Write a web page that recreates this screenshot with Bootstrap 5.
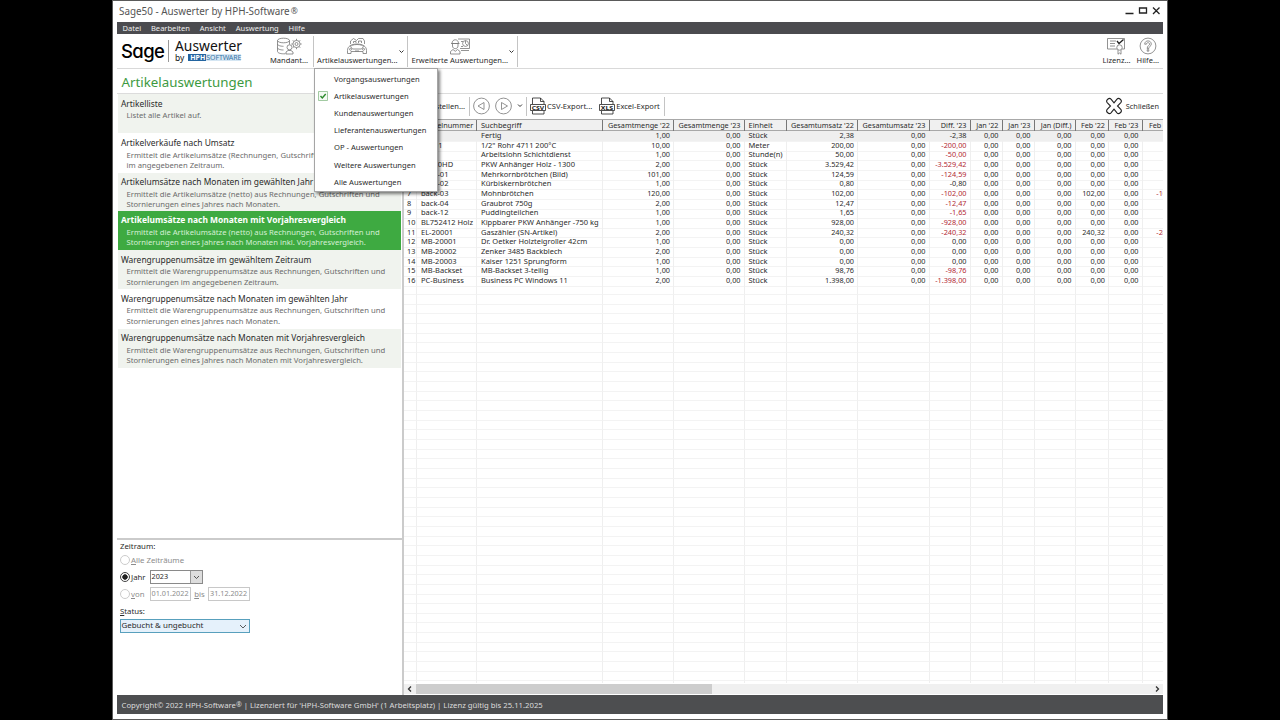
<!DOCTYPE html>
<html lang="de">
<head>
  <meta charset="UTF-8">
  <title>Sage50 - Auswerter by HPH-Software</title>
  <meta name="viewport" content="width=device-width, initial-scale=1">
  <link href="https://cdn.jsdelivr.net/npm/bootstrap@5.3.0/dist/css/bootstrap.min.css" rel="stylesheet">
  <style>
    body { background: #000; font-family: "Noto Sans", "Open Sans", sans-serif; font-size: 7.55px; line-height: 10px; color: #2b2b2b; height: 720px; overflow: hidden; }
    svg { display: block; fill: none; stroke: #777; stroke-width: .8; }
    .app-window { width: 1056px; height: 720px; margin-left: 112px; background: #fff; border: 1px solid #5a5a5a; padding: 0 4px 5px; }
    .title-bar { height: 21px; font-size: 9.87px; color: #555; padding: 0 0 2px 2px; }
    .title-bar sup { font-size: 8.5px; top: -1px; margin-left: 1px; }
    .win-buttons { stroke: #222; stroke-width: 1.3; }
    .menu-bar { height: 12px; background: #4b4b4f; color: #eee; padding-left: 5.5px; gap: 9.8px; }
    .main-tools { height: 35px; border-bottom: 1px solid #d9d9d9; }
    .tool { height: 31px; margin-top: 2px; padding: 1px 0 0; }
    .tool-label { line-height: 11px; white-space: nowrap; }
    .tool-split { width: 1px; background: #c4c4c4; }
    .brand { width: 149px; padding-left: 4px; color: #111; }
    .brand-sage { font: 500 18.5px/24px Inter, sans-serif; font-feature-settings: "cv11", "ss01"; letter-spacing: -.6px; width: 42px; color: #000; }
    .brand-line { width: 1px; height: 22px; background: #999; margin: 0 6px 0 5px; }
    .brand-name { font-size: 13.85px; line-height: 13px; color: #111; }
    .brand-by { font-size: 8.4px; line-height: 11px; }
    .brand-hph { background: #2364a0; color: #fff; font: 700 7px/7px "Noto Sans", sans-serif; padding: 0 1px 0 2px; height: 7px; }
    .brand-soft { background: #d5e6f3; color: #3a76a8; font: 7px/7px "Noto Sans", sans-serif; height: 7px; letter-spacing: -.12px; }
    .page-title { height: 25px; font-size: 13.3px; line-height: 26px; color: #3d9a41; padding-left: 4.5px; border-bottom: 1px solid #dcdcdc; }
    .side { width: 287px; border-right: 2px solid #cbcbcb; }
    .report-list { height: 444px; padding: .2px 1px 0 .5px; }
    .report-list .list-group-item { height: 39.22px; padding: 4.5px 3px 0; border: 0; border-radius: 0; background: #fff; color: #2b2b2b; flex-shrink: 0; }
    .report-list .list-group-item:nth-child(odd) { background: #f0f3ee; }
    .report-list .list-group-item.active { background: #3eaa41; color: #fff; }
    .report-name { font-size: 8.45px; line-height: 10.5px; white-space: nowrap; padding-left: .4px; }
    .active .report-name { font-weight: 700; }
    .report-text { font-size: 7.68px; line-height: 10.4px; color: #6b6b6b; padding: 1.2px 0 0 6px; white-space: nowrap; }
    .active .report-text { color: #d5f0d5; }
    .filters { border-top: 2px solid #cbcbcb; padding: 1.4px 0 0 3px; font-size: 7.8px; line-height: 10px; }
    .filter-row { height: 17px; }
    .off { color: #8c8c8c; }
    .dot { width: 10px; height: 10px; border: 1px solid #ccc; border-radius: 50%; margin-right: 1px; }
    .dot-on { border-color: #444; background: radial-gradient(circle, #222 0 2.4px, #fff 3px); }
    .radio-label { width: 18.5px; }
    .till-label { width: 17px; text-align: center; }
    .field { height: 14px; border: 1px solid #c8c8c8; font-size: 7.25px; padding-left: 1px; line-height: 10.5px; }
    .field-date { width: 41.5px; }
    .field-year { width: 53px; border-color: #8a8a8a; }
    .field-year .drop { width: 12px; height: 12px; background: #ddd; border-left: 1px solid #999; }
    .status-label { margin-top: 3.3px; }
    .field-status { width: 130px; background: #e5f1fb; border-color: #58a0bd; font-size: 7.93px; margin-top: 3px; line-height: 11.5px; padding-left: .5px; }
    .grid-tools { height: 25px; padding: 0 0 1px 5px; }
    .grid-tools .tool-split { height: 19px; }
    .grid-tools .tool-label { line-height: 12px; }
    .create-label { width: 56px; text-align: right; }
    .file-icon { stroke: #222; margin-left: 3px; }
    .csv-label { margin-left: 1px; }
    .close-label { margin: 0 4px 0 3px; font-size: 7.3px; }
    .grid-row { display: grid; grid-template-columns: 13px 60px 126px 71px 70.5px 42.5px 71px 71.5px 41px 32px 32px 41px 33.5px 33.5px 43px; height: 9.66px; }
    .grid-row > div { border-right: 1px solid #efefef; border-bottom: 1px solid #f3f3f3; padding: 0 3px 0 4px; line-height: 9.9px; font-size: 7.5px; white-space: nowrap; }
    .grid-row > div:first-child { padding: 0 0 0 3px; font-size: 7.3px; }
    .grid-row > .num { text-align: right; font-size: 7.3px; }
    .grid-row > .minus { color: #b22a35; }
    .grid-row.picked { background: #efefef; }
    .grid-row.head { height: 12px; background: #f0f0f0; border-top: 1px solid #a8a8a8; border-bottom: 1px solid #a8a8a8; }
    .grid-row.head > div { border-right-color: #777; border-bottom: 0; line-height: 10.5px; }
    .grid-row.head > div:nth-child(2) { font-size: 7.35px; }
    .grid-row.head > .num { font-size: 7.25px; }
    .grid-body { height: 552px; overflow: hidden; }
    .scroll-x { height: 10px; background: #f0f0f0; margin-top: 1px; }
    .scroll-x svg { stroke: #333; stroke-width: 1.3; }
    .scroll-thumb { width: 296px; height: 10px; background: #cdcdcd; }
    .foot { height: 19px; background: #4d4e50; color: #dcdcdc; font-size: 7.73px; padding-left: 4.5px; }
    .foot sup { font-size: 7px; top: -1px; }
    .arrow-dark { stroke: #333; stroke-width: 1; }
    .eval-menu { position: absolute; left: 0; top: 32px; width: 124px; height: 124px; padding: 1.5px 0; border: 1px solid #a5a5a5; border-radius: 0; background: #fff; box-shadow: 2px 2px 3px rgba(0, 0, 0, .5); z-index: 10; font-size: 7.58px; min-width: 0; }
    .eval-menu .dropdown-item { height: 17.2px; padding: 0 0 0 3px; color: #2b2b2b; line-height: 17px; }
    .tick-slot { width: 16px; }
  </style>
  <script src="https://cdn.jsdelivr.net/npm/bootstrap@5.3.0/dist/js/bootstrap.bundle.min.js"></script>
</head>
<body>

<div class="app-window d-flex flex-column">

  <!-- Titelleiste -->
  <div class="title-bar d-flex align-items-center justify-content-between">
    <div>Sage50 - Auswerter by HPH-Software<sup>®</sup></div>
    <svg class="win-buttons" width="39" height="12" viewBox="0 0 39 12"><path d="M1.500 8.500h8M15.500 3h7v5h-7zM29 2.500l6.500 6.500M35.500 2.500L29 9"/></svg>
  </div>

  <!-- Menü -->
  <div class="menu-bar d-flex align-items-center">
    <span>Datei</span><span>Bearbeiten</span><span>Ansicht</span><span>Auswertung</span><span>Hilfe</span>
  </div>

  <!-- Werkzeugleiste -->
  <div class="main-tools d-flex">
    <div class="brand d-flex align-items-center">
      <div class="brand-sage">Sage</div>
      <div class="brand-line"></div>
      <div>
        <div class="brand-name">Auswerter</div>
        <div class="d-flex align-items-center brand-by"><span class="me-1">by</span><span class="brand-hph">HPH</span><span class="brand-soft">SOFTWARE</span></div>
      </div>
    </div>

    <div class="tool d-flex flex-column align-items-center ps-1 pe-1 me-1">
      <svg width="26" height="18" viewBox="0 0 26 18"><ellipse cx="7.500" cy="3.500" rx="6" ry="2.300"/><path d="M1.500 3.500v11c0 1.300 2.700 2.300 6 2.300h2M13.500 3.500v4M1.500 7c0 1.300 2.700 2.300 6 2.300M1.500 10.700c0 1.300 2.700 2.300 6 2.300M10 17v-2l2-1.500h3l2 1.500v2z"/><circle cx="13.500" cy="10.300" r="2.500"/><circle cx="20.500" cy="7" r="3.600"/><circle cx="20.500" cy="7" r="1.500"/><path d="M20.500 1.800v1.600M20.500 10.600v1.600M15.300 7h1.600M24.100 7h1.600M16.800 3.300l1.200 1.200M23 9.500l1.200 1.200M24.200 3.300l-1.200 1.200M18 9.500l-1.200 1.200"/></svg>
      <span class="tool-label">Mandant...</span>
    </div>
    <div class="tool-split tool" style="margin-left:-3px"></div>

    <div class="tool d-flex position-relative">
      <div class="d-flex flex-column align-items-center" style="padding-left:3px">
        <svg width="22" height="18" viewBox="0 0 22 18"><path d="M4.500 7V4l3-2.500 3 2M10.500 3.500l2-2h4.500l1.500 2.500v3"/><path d="M1.500 13.500c0-4 3.500-6.500 9.500-6.500s9.500 2.500 9.500 6.500M1.500 13.500v3h3.500v-2h12v2h3.500v-3M4.500 9.500c1-.8 2.500-2 6.500-2s5.500 1.200 6.500 2l-2 2.500h-9zM7.500 6V4.500h2.500V6M12.500 6V4h3v2M9 14h4"/><circle cx="4.500" cy="12.300" r="1"/><circle cx="17.500" cy="12.300" r="1"/></svg>
        <span class="tool-label">Artikelauswertungen...</span>
      </div>
      <svg class="arrow-dark my-auto" width="10" height="6" viewBox="0 0 10 6"><path d="M2.500 1.500l2 2 2-2"/></svg>
      <ul class="eval-menu list-unstyled mb-0" id="evalMenu"></ul>
    </div>
    <div class="tool-split tool"></div>

    <div class="tool d-flex">
      <div class="d-flex flex-column align-items-center">
        <svg class="ms-1" width="22" height="18" viewBox="0 0 22 18"><path d="M9 2h11.500v9.500H11M12 13.500h8"/><path d="M3 6.500c0-5 6.500-5 6.500 0zM2 6.500h8.500M3.500 7v2c0 3.500 5.500 3.500 5.500 0V7M1.500 17v-2.500L4 12.500l2.300 1.800 2.200-1.800 2.500 2V17zM12 4.500h2M12 9.500h2"/><circle cx="16.500" cy="6.500" r="2.900"/><path d="M16.500 3.600v2.900l2 2"/></svg>
        <span class="tool-label" style="padding-left:3px">Erweiterte Auswertungen...</span>
      </div>
      <svg class="arrow-dark my-auto" width="9" height="6" viewBox="0 0 9 6"><path d="M1.500 1.500l2 2 2-2"/></svg>
    </div>
    <div class="tool-split tool"></div>

    <div class="tool d-flex flex-column align-items-center ms-auto">
      <svg style="margin-right:2px" width="20" height="18" viewBox="0 0 20 18"><path d="M11 12H1.500V1.500h17V12H16M4 4h6M4 6.500h5M4 9h5"/><circle cx="13.500" cy="10.500" r="2.700"/><path d="M12 13v4.200l1.500-1.200 1.500 1.200V13"/><path d="M11 4l2 2.500 4.500-4" stroke="#222" stroke-width="1.300"/></svg>
      <span class="tool-label">Lizenz...</span>
    </div>
    <div class="tool d-flex flex-column align-items-center" style="margin:2px 4px 0 6px">
      <svg width="18" height="18" viewBox="0 0 18 18"><circle cx="9" cy="9" r="7.900"/><path d="M5.700 7.200c0-4.400 6.600-4.400 6.600 0 0 2-2.500 2-2.500 4.300H8.200c0-3.200 2.500-2.900 2.500-4.300 0-2-3.300-2-3.300 0zM8.200 12.700h1.600v1.500H8.200z"/></svg>
      <span class="tool-label">Hilfe...</span>
    </div>
  </div>

  <div class="page-title">Artikelauswertungen</div>

  <div class="d-flex flex-grow-1 overflow-hidden">

    <!-- Auswertungen und Filter -->
    <div class="side d-flex flex-column flex-shrink-0">
      <div class="report-list list-group" id="reportList"></div>

      <div class="filters flex-grow-1">
        <div>Zeitraum:</div>
        <div class="filter-row d-flex align-items-center off"><span class="dot"></span><span><u>A</u>lle Zeiträume</span></div>
        <div class="filter-row d-flex align-items-center">
          <span class="dot dot-on"></span><span class="radio-label"><u>J</u>ahr</span>
          <div class="field field-year d-flex justify-content-between"><span>2023</span><span class="drop"><svg width="11" height="12" viewBox="0 0 11 12"><path d="M3 5l2.500 2.500L8 5" stroke="#333"/></svg></span></div>
        </div>
        <div class="filter-row d-flex align-items-center off">
          <span class="dot"></span><span class="radio-label"><u>v</u>on</span>
          <div class="field field-date">01.01.2022</div>
          <span class="till-label"><u>b</u>is</span>
          <div class="field field-date">31.12.2022</div>
        </div>
        <div class="status-label"><u>S</u>tatus:</div>
        <div class="field field-status d-flex justify-content-between"><span>Gebucht &amp; ungebucht</span><svg width="12" height="12" viewBox="0 0 12 12"><path d="M3 5l3 3 3-3" stroke="#333"/></svg></div>
      </div>
    </div>

    <!-- Ergebnistabelle -->
    <div class="flex-grow-1 overflow-hidden">
      <div class="grid-tools d-flex align-items-center">
        <span class="tool-label create-label">Erstellen...</span>
        <span class="tool-split ms-1"></span>
        <svg width="56" height="18" viewBox="0 0 56 18"><circle cx="11.500" cy="9" r="7.900"/><path d="M14 5.500v7L8 9z"/><circle cx="33.500" cy="9" r="7.900"/><path d="M31.500 5.500v7l6-3.500z"/><path class="arrow-dark" d="M48 7.500l2 2 2-2"/></svg>
        <span class="tool-split"></span>
        <svg class="file-icon" width="17" height="18" viewBox="0 0 17 18"><path d="M2.500 7V1h8l3.500 3.500V7M10.500 1v3.500H14M2.500 14v3H14v-3M.5 7.500h15v6H.5z"/><text x="1.800" y="12.700" font-size="6" font-weight="700" textLength="12.400" lengthAdjust="spacingAndGlyphs" fill="#222" stroke="none">CSV</text></svg>
        <span class="tool-label">CSV-Export...</span>
        <svg class="file-icon" style="margin-left:7px" width="16" height="18" viewBox="0 0 16 18"><path d="M2.500 7V1h8l3.500 3.500V7M10.500 1v3.500H14M2.500 14v3H14v-3M.5 7.500h15v6H.5z"/><text x="1.800" y="12.700" font-size="6" font-weight="700" textLength="12.400" lengthAdjust="spacingAndGlyphs" fill="#222" stroke="none">XLS</text></svg>
        <span class="tool-label csv-label">Excel-Export</span>
        <span class="tool-split ms-1"></span>
        <svg class="ms-auto" width="18" height="18" viewBox="0 0 18 18"><path stroke="#222" stroke-width="1.100" d="M9 5.800l3-3.600c1.800-2 5.700 1 3.800 3.400L12.500 9l3.300 3.400c1.900 2.400-2 5.400-3.800 3.400l-3-3.600-3 3.600c-1.800 2-5.700-1-3.800-3.400L5.500 9 2.200 5.600C.3 3.200 4.200.2 6 2.200z"/></svg>
        <span class="tool-label close-label">Schließen</span>
      </div>
      <div class="grid-row head" id="gridHead"></div>
      <div class="grid-body" id="gridBody"></div>
      <div class="scroll-x d-flex align-items-center justify-content-between">
        <svg width="12" height="10" viewBox="0 0 12 10"><path d="M7 2.500L4.500 5 7 7.500"/></svg>
        <div class="scroll-thumb me-auto"></div>
        <svg width="12" height="10" viewBox="0 0 12 10"><path d="M5 2.500L7.500 5 5 7.500"/></svg>
      </div>
    </div>
  </div>

  <!-- Statusleiste -->
  <div class="foot d-flex align-items-center"><span>Copyright© 2022 HPH-Software<sup>®</sup> | Lizenziert für 'HPH-Software GmbH' (1 Arbeitsplatz) | Lizenz gültig bis 25.11.2025</span></div>
</div>

<script>
  const menu = ["Vorgangsauswertungen", "Artikelauswertungen", "Kundenauswertungen", "Lieferantenauswertungen",
    "OP - Auswertungen", "Weitere Auswertungen", "Alle Auswertungen"];
  const tick = '<svg width="10" height="10" viewBox="0 0 10 10"><path d="M.5.5h9v9h-9z" fill="#f4faf4" stroke="#8bbd8b"/><path d="M2.500 5l1.800 2L7.700 3" stroke="#2b8a2b" stroke-width="1.400"/></svg>';

  document.getElementById('evalMenu').innerHTML = menu.map((m, i) =>
    `<li class="dropdown-item d-flex align-items-center"><span class="tick-slot">${i === 1 ? tick : ''}</span>${m}</li>`).join('');

  const reports = [
    ["Artikelliste", "Listet alle Artikel auf."],
    ["Artikelverkäufe nach Umsatz", "Ermittelt die Artikelumsätze (Rechnungen, Gutschriften)<br>im angegebenen Zeitraum."],
    ["Artikelumsätze nach Monaten im gewählten Jahr", "Ermittelt die Artikelumsätze (netto) aus Rechnungen, Gutschriften und<br>Stornierungen eines Jahres nach Monaten."],
    ["Artikelumsätze nach Monaten mit Vorjahresvergleich", "Ermittelt die Artikelumsätze (netto) aus Rechnungen, Gutschriften und<br>Stornierungen eines Jahres nach Monaten inkl. Vorjahresvergleich."],
    ["Warengruppenumsätze im gewähltem Zeitraum", "Ermittelt die Warengruppenumsätze aus Rechnungen, Gutschriften und<br>Stornierungen im angegebenen Zeitraum."],
    ["Warengruppenumsätze nach Monaten im gewählten Jahr", "Ermittelt die Warengruppenumsätze aus Rechnungen, Gutschriften und<br>Stornierungen eines Jahres nach Monaten."],
    ["Warengruppenumsätze nach Monaten mit Vorjahresvergleich", "Ermittelt die Warengruppenumsätze aus Rechnungen, Gutschriften und<br>Stornierungen eines Jahres nach Monaten mit Vorjahresvergleich."]
  ];
  document.getElementById('reportList').innerHTML = reports.map((r, i) =>
    `<div class="list-group-item${i === 3 ? ' active' : ''}"><div class="report-name">${r[0]}</div><div class="report-text">${r[1]}</div></div>`).join('');

  const heads = ["", "Artikelnummer", "Suchbegriff", "Gesamtmenge '22", "Gesamtmenge '23", "Einheit", "Gesamtumsatz '22",
    "Gesamtumsatz '23", "Diff. '23", "Jan '22", "Jan '23", "Jan (Diff.)", "Feb '22", "Feb '23", "Feb (Diff.)"];
  const isNum = c => c > 2 && c !== 5;
  document.getElementById('gridHead').innerHTML = heads.map((h, c) =>
    `<div class="${isNum(c) ? 'num' : ''}">${h}</div>`).join('');

  // Nummer, Suchbegriff, Menge '22, Einheit, Umsatz '22, Feb '22
  const items = [
    ["", "Fertig", "1,00", "Stück", "2,38"],
    ["00001", "1/2\" Rohr 4711 200°C", "10,00", "Meter", "200,00"],
    ["", "Arbeitslohn Schichtdienst", "1,00", "Stunde(n)", "50,00"],
    ["L1300HD", "PKW Anhänger Holz - 1300", "2,00", "Stück", "3.529,42"],
    ["back-01", "Mehrkornbrötchen (Bild)", "101,00", "Stück", "124,59"],
    ["back-02", "Kürbiskernbrötchen", "1,00", "Stück", "0,80"],
    ["back-03", "Mohnbrötchen", "120,00", "Stück", "102,00", "102,00"],
    ["back-04", "Graubrot 750g", "2,00", "Stück", "12,47"],
    ["back-12", "Puddingteilchen", "1,00", "Stück", "1,65"],
    ["BL752412 Holz", "Kippbarer PKW Anhänger -750 kg", "1,00", "Stück", "928,00"],
    ["EL-20001", "Gaszähler (SN-Artikel)", "2,00", "Stück", "240,32", "240,32"],
    ["MB-20001", "Dr. Oetker Holzteigroller 42cm", "1,00", "Stück", "0,00"],
    ["MB-20002", "Zenker 3485 Backblech", "2,00", "Stück", "0,00"],
    ["MB-20003", "Kaiser 1251 Sprungform", "1,00", "Stück", "0,00"],
    ["MB-Backset", "MB-Backset 3-teilig", "1,00", "Stück", "98,76"],
    ["PC-Business", "Business PC Windows 11", "2,00", "Stück", "1.398,00"]
  ];
  const zero = "0,00";
  let rows = '';
  for (let i = 0; i < 58; i++) {
    const t = items[i];
    let cells = Array(15).fill('');
    if (t) {
      const diff = t[4] === zero ? zero : '-' + t[4];
      cells = [i + 1, t[0], t[1], t[2], zero, t[3], t[4], zero, diff, zero, zero, zero, t[5] || zero, zero, t[5] ? '-' + t[5] : ''];
    }
    rows += `<div class="grid-row${i === 0 ? ' picked' : ''}">` + cells.map((v, c) => {
      const minus = (c === 8 && i !== 0 && v !== '-0,80' && String(v)[0] === '-') || (c === 14 && v);
      return `<div class="${isNum(c) ? 'num' : ''}${minus ? ' minus' : ''}">${v}</div>`;
    }).join('') + '</div>';
  }
  document.getElementById('gridBody').innerHTML = rows;
</script>

</body>
</html>
